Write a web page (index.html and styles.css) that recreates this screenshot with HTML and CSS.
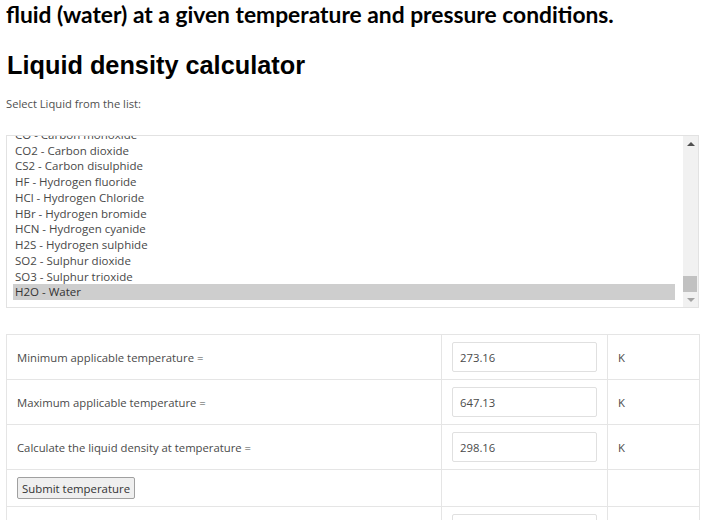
FILE: index.html
```html
<!DOCTYPE html>
<html lang="en">
<head>
<meta charset="utf-8">
<title>Liquid density calculator</title>
<link rel="stylesheet" href="styles.css">
</head>
<body>
<div class="page">
  <p class="intro">fluid (water) at a given temperature and pressure conditions.</p>
  <h2 class="title">Liquid density calculator</h2>
  <p class="label">Select Liquid from the list:</p>

  <div class="listbox">
    <div class="options">
      <div class="opt">CO - Carbon monoxide</div>
      <div class="opt">CO2 - Carbon dioxide</div>
      <div class="opt">CS2 - Carbon disulphide</div>
      <div class="opt">HF - Hydrogen fluoride</div>
      <div class="opt">HCl - Hydrogen Chloride</div>
      <div class="opt">HBr - Hydrogen bromide</div>
      <div class="opt">HCN - Hydrogen cyanide</div>
      <div class="opt">H2S - Hydrogen sulphide</div>
      <div class="opt">SO2 - Sulphur dioxide</div>
      <div class="opt">SO3 - Sulphur trioxide</div>
      <div class="opt selected">H2O - Water</div>
    </div>
    <div class="scrollbar">
      <div class="sb-btn"><span class="arrow-up"></span></div>
      <div class="sb-track"><div class="sb-thumb"></div></div>
      <div class="sb-btn"><span class="arrow-down"></span></div>
    </div>
  </div>

  <table class="calc">
    <colgroup>
      <col class="c1">
      <col class="c2">
      <col class="c3">
    </colgroup>
    <tr>
      <td>Minimum applicable temperature =</td>
      <td><input class="field" type="text" value="273.16"></td>
      <td>K</td>
    </tr>
    <tr>
      <td>Maximum applicable temperature =</td>
      <td><input class="field" type="text" value="647.13"></td>
      <td>K</td>
    </tr>
    <tr>
      <td>Calculate the liquid density at temperature =</td>
      <td><input class="field" type="text" value="298.16"></td>
      <td>K</td>
    </tr>
    <tr>
      <td><button class="btn" type="button">Submit temperature</button></td>
      <td></td>
      <td></td>
    </tr>
    <tr>
      <td></td>
      <td><input class="field" type="text" value=""></td>
      <td></td>
    </tr>
  </table>
</div>
</body>
</html>
```

FILE: styles.css
```css
html, body {
  margin: 0;
  padding: 0;
  background: #fff;
}

.page {
  padding: 0 13px 0 6px;
  font-family: "Open Sans", "DejaVu Sans", sans-serif;
  color: #555;
}

.intro {
  margin: 0;
  font-family: Lato, "Open Sans", sans-serif;
  font-weight: 700;
  font-size: 22.8px;
  line-height: 29px;
  color: #000;
}

.title {
  margin: 22px 0 0 1px;
  font-family: "Liberation Sans", Arial, sans-serif;
  font-weight: 700;
  font-size: 25.3px;
  line-height: 28px;
  color: #000;
}

.label {
  margin: 17px 0 0;
  font-size: 11.2px;
  line-height: 15px;
  color: #505050;
}

.listbox {
  margin-top: 24px;
  height: 173px;
  box-sizing: border-box;
  border: 1px solid #e2e2e2;
  display: flex;
}

.options {
  flex: 1;
  overflow: hidden;
  display: flex;
  flex-direction: column;
  justify-content: flex-end;
  padding: 0 8px 7px 6px;
}

.opt {
  flex: none;
  font-size: 11.5px;
  line-height: 15.75px;
  color: #484848;
  padding-left: 2px;
  white-space: nowrap;
}

.opt.selected {
  background: #cecece;
  color: #333;
}

.scrollbar {
  width: 15px;
  display: flex;
  flex-direction: column;
  background: #f1f1f1;
}

.sb-btn {
  height: 15px;
  display: flex;
  align-items: center;
  justify-content: center;
}

.arrow-up {
  width: 0;
  height: 0;
  border-left: 4px solid transparent;
  border-right: 4px solid transparent;
  border-bottom: 4px solid #505050;
}

.arrow-down {
  width: 0;
  height: 0;
  border-left: 4px solid transparent;
  border-right: 4px solid transparent;
  border-top: 4px solid #a3a3a3;
}

.sb-track {
  flex: 1;
  display: flex;
  flex-direction: column;
  justify-content: flex-end;
}

.sb-thumb {
  height: 16px;
  margin: 0 1px 0 0;
  background: #c1c1c1;
}

.calc {
  margin-top: 26px;
  width: 693px;
  border-collapse: collapse;
  table-layout: fixed;
  font-size: 11.3px;
  color: #4a4a4a;
}

.c1 { width: 435px; }
.c2 { width: 166px; }
.c3 { width: 92px; }

.calc td {
  border: 1px solid #e5e5e5;
  padding: 7px 10px;
  vertical-align: middle;
  line-height: 15px;
}

.field {
  display: block;
  width: 100%;
  height: 30px;
  box-sizing: border-box;
  border: 1px solid #e0e0e0;
  border-radius: 2px;
  padding: 0 7px;
  margin: 0;
  font-family: "Open Sans", sans-serif;
  font-size: 11.3px;
  color: #4a4a4a;
  background: #fff;
}

.btn {
  display: block;
  height: 22px;
  width: 118px;
  padding: 0;
  margin: 0;
  font-family: "Open Sans", sans-serif;
  font-size: 11.4px;
  color: #333;
  background: #efefef;
  border: 1px solid #a0a0a0;
  border-radius: 2px;
}
```
